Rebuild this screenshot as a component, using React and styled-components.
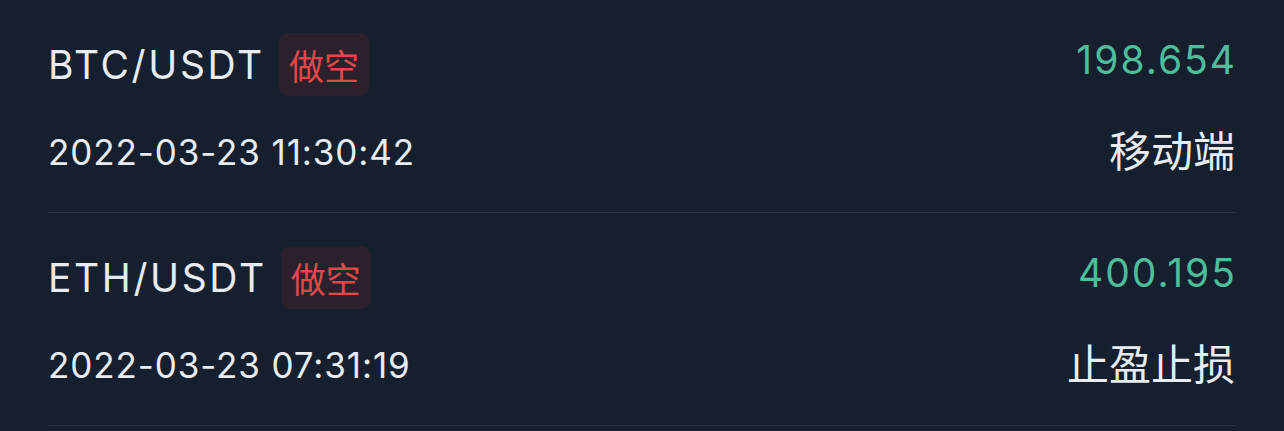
import styled, { createGlobalStyle } from "styled-components";

const GlobalStyle = createGlobalStyle`
  html, body {
    margin: 0;
    padding: 0;
    background: #161f2e;
  }
  body {
    font-family: Inter, "Noto Sans CJK SC", sans-serif;
    -webkit-font-smoothing: antialiased;
  }
`;

const orders = [
  {
    pair: "BTC/USDT",
    side: "做空",
    amount: "198.654",
    time: "2022-03-23 11:30:42",
    source: "移动端",
  },
  {
    pair: "ETH/USDT",
    side: "做空",
    amount: "400.195",
    time: "2022-03-23 07:31:19",
    source: "止盈止损",
  },
];

const Page = styled.div`
  width: 1284px;
  height: 431px;
  padding: 0 48px;
  box-sizing: border-box;
  background: #161f2e;
  overflow: hidden;
`;

const Item = styled.div`
  padding: 33px 0 35px;
  border-bottom: 1px solid #283243;
`;

const TopRow = styled.div`
  display: flex;
  align-items: center;
  justify-content: space-between;
  height: 63px;
`;

const BottomRow = styled.div`
  display: flex;
  align-items: center;
  justify-content: space-between;
  height: 50px;
  margin-top: 31px;
`;

const PairBox = styled.div`
  display: flex;
  align-items: center;
  gap: 14px;
`;

const Pair = styled.span`
  font-size: 39px;
  color: #e8ebf0;
  letter-spacing: 2.6px;
`;

const Tag = styled.span`
  display: inline-flex;
  align-items: center;
  justify-content: center;
  height: 63px;
  padding: 0 10px;
  border-radius: 9px;
  background: #2a212d;
  color: #e2484a;
  font-size: 35px;
  font-family: "Noto Sans CJK SC", sans-serif;
`;

const Amount = styled.span`
  font-size: 39px;
  color: #4dbd9b;
  letter-spacing: 2px;
  margin-right: -1px;
  margin-top: -10px;
`;

const Time = styled.span`
  font-size: 35px;
  color: #e8ebf0;
  letter-spacing: 0.9px;
`;

const Source = styled.span`
  font-size: 42px;
  color: #e8ebf0;
  margin-right: 1px;
  margin-bottom: 8px;
  font-family: "Noto Sans CJK SC", sans-serif;
`;

export default function App() {
  return (
    <>
      <GlobalStyle />
      <Page>
        {orders.map((o) => (
          <Item key={o.pair}>
            <TopRow>
              <PairBox>
                <Pair>{o.pair}</Pair>
                <Tag>{o.side}</Tag>
              </PairBox>
              <Amount>{o.amount}</Amount>
            </TopRow>
            <BottomRow>
              <Time>{o.time}</Time>
              <Source>{o.source}</Source>
            </BottomRow>
          </Item>
        ))}
      </Page>
    </>
  );
}
